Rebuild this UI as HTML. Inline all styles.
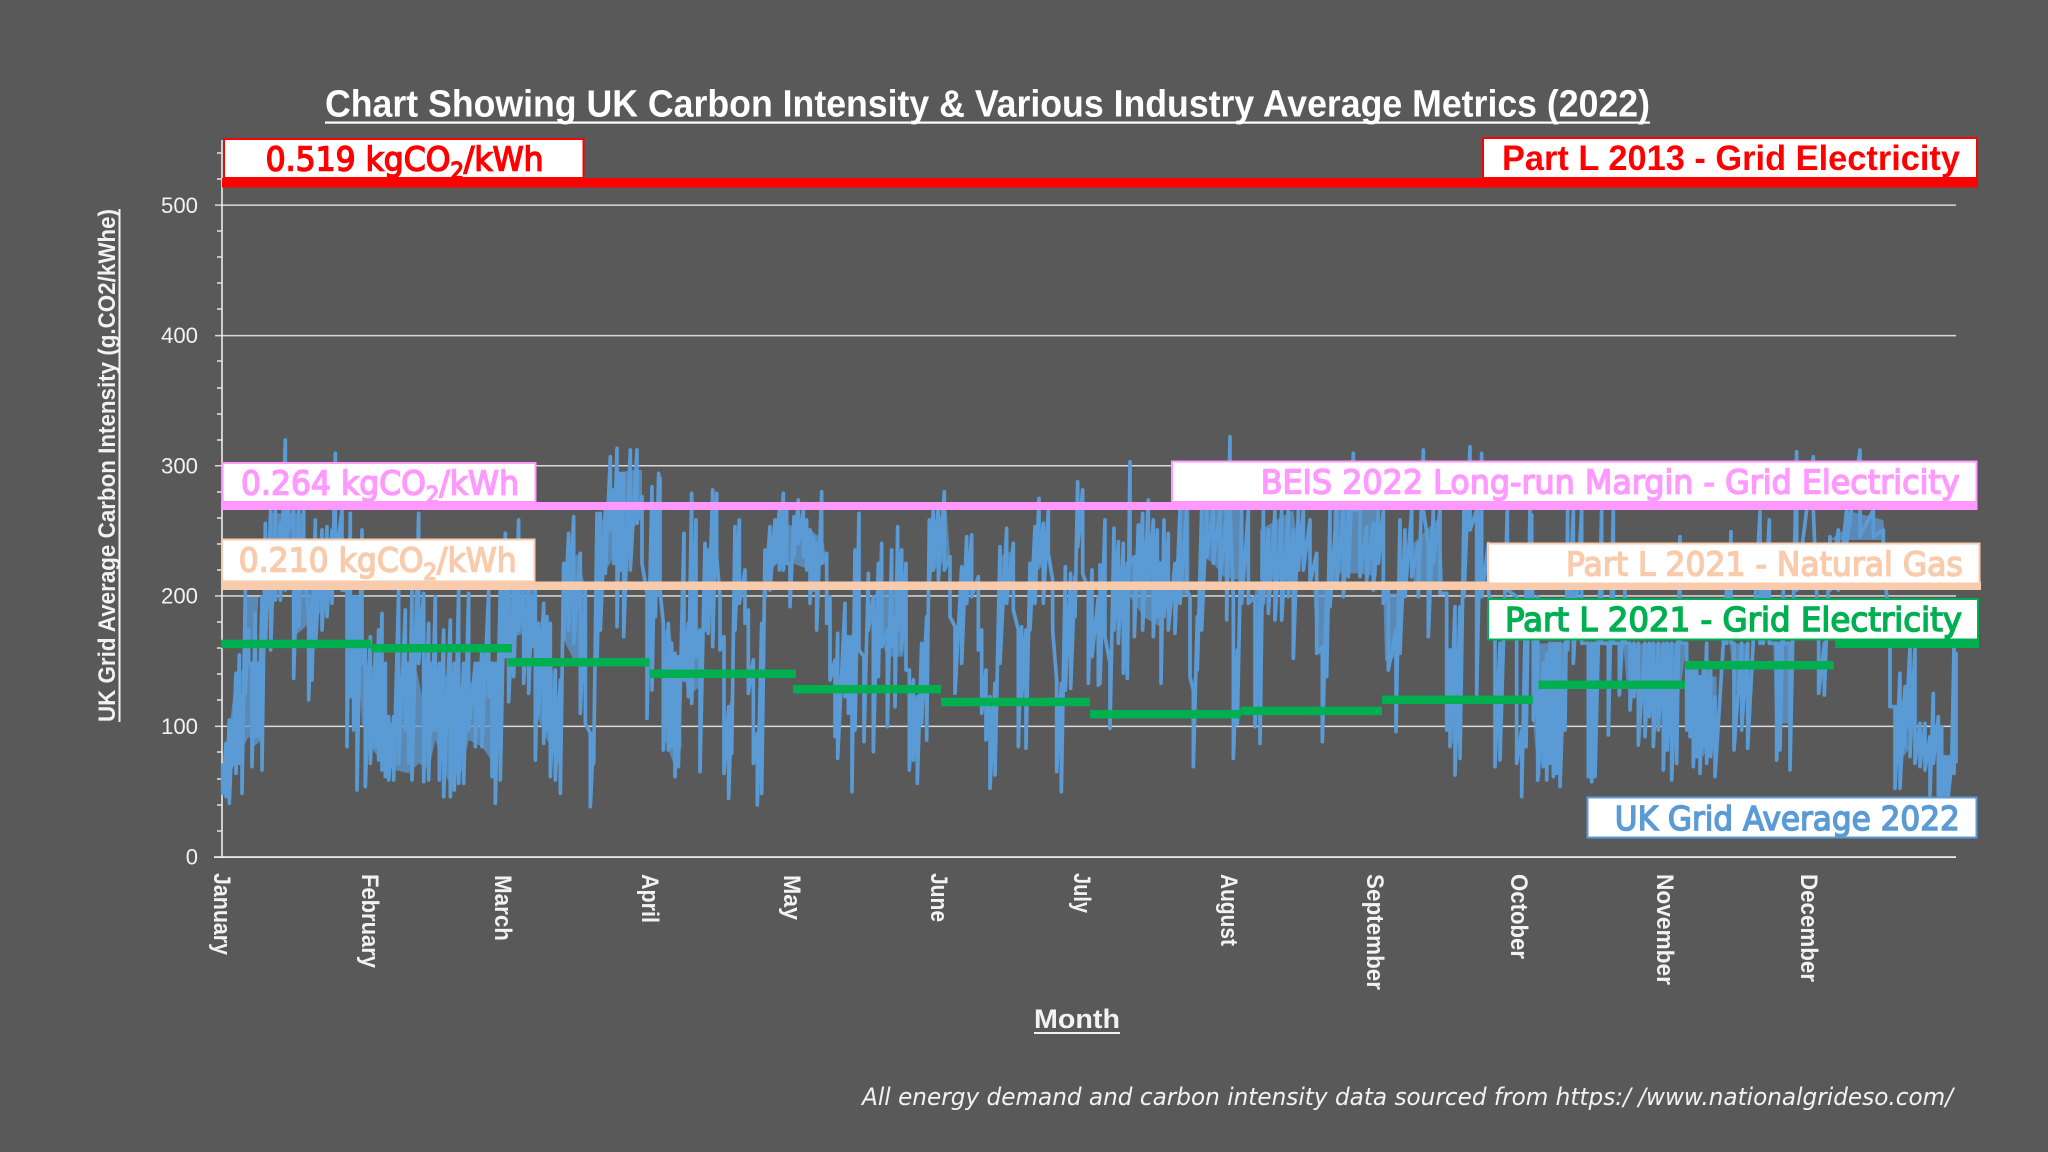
<!DOCTYPE html>
<html lang="en"><head><meta charset="utf-8"><title>UK Carbon Intensity 2022</title>
<style>
html,body{margin:0;padding:0;background:#595959;width:2048px;height:1152px;overflow:hidden}
svg{display:block}
text{font-family:"Liberation Sans",sans-serif}
.lab{font-family:"DejaVu Sans",sans-serif;font-size:33px;stroke-width:1.5px}
.yn{font-size:22px;fill:#f2f2f2;text-anchor:end}
.mo{font-size:24px;font-weight:700;fill:#f2f2f2}
</style></head><body>
<svg width="2048" height="1152" viewBox="0 0 2048 1152" xmlns="http://www.w3.org/2000/svg">
<rect width="2048" height="1152" fill="#595959"/>
<!-- title -->
<text x="325" y="116.5" font-size="38" font-weight="700" fill="#fff" textLength="1325" lengthAdjust="spacingAndGlyphs">Chart Showing UK Carbon Intensity &amp; Various Industry Average Metrics (2022)</text>
<rect x="325" y="121.5" width="1325" height="2.2" fill="#fff"/>
<!-- gridlines -->
<g fill="#d9d9d9">
<rect x="215" y="204.4" width="1741" height="1.5"/>
<rect x="215" y="334.9" width="1741" height="1.5"/>
<rect x="215" y="465" width="1741" height="1.5"/>
<rect x="215" y="595.2" width="1741" height="1.5"/>
<rect x="215" y="725.6" width="1741" height="1.5"/>
<rect x="214" y="856.2" width="1742" height="1.8" fill="#ececec"/>
</g>
<!-- minor ticks -->
<path d="M217 153h5M217 179h5M217 231h5M217 257h5M217 283h5M217 309h5M217 361h5M217 388h5M217 414h5M217 440h5M217 492h5M217 518h5M217 544h5M217 570h5M217 622h5M217 648h5M217 674h5M217 700h5M217 752h5M217 779h5M217 805h5M217 831h5" stroke="#e6e6e6" stroke-width="1.5" fill="none"/>
<rect x="221.2" y="140" width="1.6" height="717" fill="#ececec"/>
<!-- blue core masses -->
<g fill="#5b9bd5" fill-opacity=".72">
<g transform="translate(222 430) scale(.33333)">
<polygon points="22,900 40,740 60,720 80,700 110,720 125,760 120,930 95,950 80,920 60,960 30,1020 10,1040"/>
<polygon points="145,250 250,250 250,330 145,330"/>
<polygon points="70,500 110,500 100,640 70,640"/>
<polygon points="215,480 330,480 310,540 280,560 240,600 215,620"/>
<polygon points="410,680 470,720 490,860 510,880 540,720 580,700 600,800 660,760 680,720 720,770 780,740 810,790 815,1000 780,950 740,930 720,1020 680,1060 640,930 620,1020 590,1000 560,1030 520,1020 480,1000 440,940 420,880"/>
<polygon points="840,480 940,480 930,600 880,620 840,620"/>
<polygon points="945,600 985,590 995,760 1010,800 1010,1000 970,920 945,860"/>
<polygon points="1030,400 1070,370 1090,480 1095,640 1060,700 1030,640"/>
<polygon points="1130,300 1165,210 1190,130 1225,120 1260,120 1260,260 1230,300 1190,340 1165,400 1130,450"/>
</g>
<g transform="translate(660 430) scale(.33333)">
<polygon points="5,610 30,590 40,680 60,760 65,950 40,1000 15,930"/>
<polygon points="70,600 120,600 130,760 85,800 70,730"/>
<polygon points="320,360 360,270 400,290 440,290 490,330 500,400 450,420 400,400 350,400 320,440"/>
<polygon points="810,290 860,240 870,380 810,430"/>
<polygon points="655,480 730,480 730,680 680,680 655,600"/>
<polygon points="1120,310 1170,300 1170,380 1120,440"/>
<polygon points="1020,380 1060,360 1060,480 1020,480"/>
</g>
<g transform="translate(1100 430) scale(.33333)">
<polygon points="90,400 150,350 185,400 210,440 210,500 180,590 130,560 90,500"/>
<polygon points="240,240 268,240 268,500 240,500"/>
<polygon points="310,240 420,240 420,450 370,440 340,400 310,380"/>
<polygon points="480,300 580,240 600,400 580,450 480,450"/>
<polygon points="700,240 840,240 830,440 780,430 720,430 700,460"/>
<polygon points="940,340 1020,260 1030,470 940,470"/>
<polygon points="850,490 900,490 895,660 870,700 855,690"/>
<polygon points="465,480 488,480 488,830 465,830"/>
<polygon points="1040,670 1080,670 1080,940 1050,940"/>
<polygon points="640,480 690,480 675,680 650,670"/>
</g>
<g transform="translate(1530 430) scale(.33333)">
<polygon points="10,640 108,640 108,900 80,920 60,1000 20,1000 10,880"/>
<polygon points="170,640 197,640 197,1040 170,1040"/>
<polygon points="280,640 470,640 455,750 400,800 340,790 290,770"/>
<polygon points="480,740 560,740 560,900 520,980 490,940"/>
<polygon points="600,640 660,640 650,780 610,780"/>
<polygon points="730,640 790,640 785,880 735,880"/>
<polygon points="1095,850 1125,790 1135,960 1100,1010"/>
<polygon points="945,240 1060,270 1065,330 900,330 940,300"/>
</g>
</g>
<!-- blue series -->
<g fill="none" stroke="#5b9bd5" stroke-width="11" stroke-linejoin="round">
<polyline transform="translate(222 430) scale(.33333)" points="2,1000 2,1090 12,940 12,1100 22,870 22,1120 32,870 32,1000 42,730 42,1030 52,675 52,1000 60,800 60,1090 70,480 70,790 80,600 80,700 90,700 90,1010 100,550 100,920 110,700 110,920 120,500 120,1020 130,280 130,650 146,240 146,660 160,240 160,510 175,280 175,510 190,30 190,480 200,240 200,300 215,240 215,745 230,240 230,590 245,240 245,400 260,560 260,810 270,500 270,750 280,270 280,650 300,300 300,600 315,290 315,560 330,300 330,520 340,70 340,400 360,240 360,480 375,480 375,950 385,250 385,800 395,500 395,900 405,500 405,1080 420,300 420,700 430,650 430,1070 445,620 445,1000 460,670 460,950 470,600 470,990 480,550 480,1020 490,700 490,1040 500,860 500,1050 515,860 515,1050 530,480 530,1000 550,540 550,900 560,700 560,1000 570,480 570,1050 590,250 590,700 605,490 605,1055 620,580 620,1050 630,700 630,900 640,500 640,900 652,700 652,1050 665,600 665,1100 685,570 685,1100 697,700 697,1080 710,480 710,1060 725,700 725,1060 740,490 740,900 760,700 760,950 770,700 770,880 780,650 780,950 800,480 800,800 810,700 810,1040 820,700 820,1120 835,480 835,1050 850,310 850,680 860,480 860,815 875,480 875,740 890,270 890,600 905,480 905,760 920,480 920,790 930,500 930,650 940,480 940,990 950,580 950,850 965,520 965,940 975,560 975,900 985,580 985,1040 1000,720 1000,1050 1015,750 1015,1090 1025,400 1025,630 1040,310 1040,600 1055,260 1055,640 1075,370 1075,850 1090,480 1090,880 1105,910 1105,1130 1115,910 1115,1000 1125,250 1125,700 1135,250 1135,600 1150,240 1150,430 1165,80 1165,300 1175,180 1175,400 1185,55 1185,590 1195,130 1195,420 1205,130 1205,620 1225,60 1225,420 1245,60 1245,280 1260,200 1260,400 1275,490 1275,865 1290,170 1290,780 1300,240 1300,560 1310,130 1310,500"/>
<polyline transform="translate(660 430) scale(.33333)" points="0,140 0,480 10,580 10,960 25,580 25,960 35,640 35,950 45,670 45,1040 55,680 55,1010 72,310 72,750 85,580 85,800 95,190 95,820 108,270 108,680 120,600 120,1025 135,340 135,600 145,360 145,610 158,180 158,650 170,190 170,380 180,500 180,660 192,620 192,1030 206,830 206,1105 215,820 215,970 225,290 225,600 238,270 238,520 255,420 255,580 265,540 265,790 280,690 280,1000 292,910 292,1125 305,580 305,1090 315,360 315,500 330,290 330,480 345,270 345,400 358,240 358,420 370,190 370,420 380,240 380,400 390,400 390,530 402,260 402,380 415,210 415,340 430,240 430,380 440,270 440,420 450,300 450,520 460,320 460,480 470,340 470,600 485,185 485,400 500,370 500,580 510,500 510,750 525,690 525,920 533,610 533,985 555,520 555,800 565,620 565,850 576,620 576,1085 585,360 585,900 597,250 597,660 612,680 612,935 625,430 625,600 640,500 640,965 655,400 655,740 665,340 665,650 682,600 682,890 695,360 695,650 705,560 705,830 713,290 713,600 725,360 725,660 738,400 738,720 748,720 748,1020 760,750 760,990 772,800 772,1060 785,640 785,880 800,560 800,930 808,270 808,470 820,230 820,420 835,230 835,450 853,185 853,420 870,380 870,560 885,590 885,790 905,410 905,700 920,320 920,520 935,315 935,500 955,440 955,660 965,600 965,850 978,720 978,930 990,800 990,1075 1005,760 1005,1035 1020,350 1020,700 1040,295 1040,520 1060,340 1060,540 1075,600 1075,950 1085,590 1085,800 1098,600 1098,955 1110,400 1110,600 1125,290 1125,520 1137,205 1137,400 1150,280 1150,520 1165,240 1165,370 1178,450 1178,600 1190,750 1190,1025 1204,760 1204,1085 1216,410 1216,780 1232,430 1232,775 1245,440 1245,560 1253,155 1253,350 1268,180 1268,430 1285,480 1285,760 1296,420 1296,680 1315,500 1315,770"/>
<polyline transform="translate(1100 430) scale(.33333)" points="0,400 0,760 15,270 15,620 30,700 30,895 42,295 42,600 55,335 55,640 70,340 70,730 82,400 82,745 90,95 90,400 103,380 103,620 115,285 115,480 128,250 128,600 145,210 145,470 160,270 160,620 172,300 172,560 183,400 183,760 192,270 192,560 205,310 205,600 225,400 225,610 240,240 240,520 260,240 260,480 270,500 270,740 280,780 280,1010 292,560 292,720 305,240 305,600 320,240 320,380 340,240 340,400 360,240 360,450 380,240 380,570 390,20 390,240 400,500 400,985 412,660 412,880 425,240 425,520 445,240 445,520 465,500 465,890 480,480 480,940 490,240 490,520 505,300 505,550 525,240 525,570 545,240 545,570 565,240 565,500 580,300 580,685 595,240 595,420 610,240 610,420 630,270 630,460 650,370 650,670 667,650 667,935 680,470 680,740 690,240 690,530 710,240 710,470 730,240 730,500 745,240 745,440 760,70 760,240 780,240 780,440 800,290 800,450 820,280 820,480 835,240 835,400 850,240 850,520 865,470 865,720 888,600 888,905 900,270 900,670 915,300 915,500 935,240 935,440 955,340 955,500 970,60 970,240 985,340 985,620 1000,240 1000,400 1020,240 1020,490 1040,490 1040,900 1050,660 1050,950 1065,530 1065,1035 1080,530 1080,985 1092,240 1092,500 1110,50 1110,300 1130,240 1130,800 1145,70 1145,500 1165,340 1165,480 1185,600 1185,1010 1200,640 1200,990 1222,240 1222,480 1250,500 1250,1000 1265,900 1265,1100 1278,480 1278,950 1290,240 1290,480 1300,500 1300,800 1313,500 1313,1055"/>
<polyline transform="translate(1530 430) scale(.33333)" points="5,250 5,330 10,640 10,870 25,770 25,1040 40,700 40,1010 50,670 50,1050 60,640 60,1000 70,640 70,1040 80,640 80,1030 90,640 90,1070 105,640 105,900 113,240 113,660 130,240 130,700 155,240 155,640 175,640 175,1040 185,640 185,1055 195,640 195,1040 215,240 215,640 235,640 235,915 250,240 250,640 268,640 268,795 285,480 285,640 300,640 300,840 312,640 312,800 325,640 325,945 345,640 345,920 358,640 358,860 370,640 370,950 385,640 385,900 400,640 400,1020 412,640 412,960 425,640 425,1050 440,640 440,1000 450,320 450,640 470,640 470,900 480,700 480,920 490,700 490,1010 500,720 500,980 510,740 510,1030 520,720 520,950 530,640 530,1000 542,720 542,980 555,800 555,1040 590,480 590,640 603,305 603,640 612,640 612,960 635,640 635,900 653,640 653,955 690,245 690,640 700,480 700,640 718,270 718,640 740,640 740,990 750,640 750,960 760,480 760,640 780,640 780,1020 800,65 800,480 850,80 850,240 866,640 866,790 883,640 883,795 900,320 900,480 925,300 925,480 950,240 950,340 990,60 990,320 1030,240 1030,320 1060,300 1060,340 1080,655 1080,830 1095,830 1095,1075 1110,730 1110,1075 1125,770 1125,950 1140,650 1140,980 1155,650 1155,1000 1170,880 1170,1010 1185,880 1185,1020 1200,920 1200,1095 1210,790 1210,1000 1225,860 1225,1095 1235,890 1235,1095 1245,980 1245,1095 1255,980 1255,1095 1265,1000 1265,1010 1272,650 1272,1030 1278,670 1278,1000"/>
</g>
<!-- coloured lines -->
<rect x="222" y="178" width="1756" height="9.5" fill="#ff0000"/>
<rect x="221" y="502" width="1756.5" height="8" fill="#ff99ff"/>
<rect x="221" y="581.5" width="1760" height="8.5" fill="#f8cbad"/>
<!-- green segments -->
<g fill="#00b050">
<rect x="221" y="639.7" width="150" height="8.5"/>
<rect x="371" y="644" width="141" height="8.5"/>
<rect x="507.6" y="658" width="142" height="8.5"/>
<rect x="649.5" y="669.5" width="146.5" height="8.5"/>
<rect x="793" y="685" width="148" height="8.5"/>
<rect x="941" y="697.7" width="149" height="8.5"/>
<rect x="1090" y="710" width="150.6" height="8.5"/>
<rect x="1240.6" y="706.7" width="141.4" height="8.5"/>
<rect x="1382" y="695.5" width="150.8" height="8.5"/>
<rect x="1538.5" y="680.5" width="146.5" height="8.5"/>
<rect x="1685" y="661" width="149" height="8.5"/>
<rect x="1835" y="639.5" width="144" height="8.5"/>
</g>
<!-- label boxes -->
<g fill="#fff" stroke-width="2">
<rect x="224" y="139" width="359.5" height="39" stroke="#ff0000"/>
<rect x="1483" y="138" width="494" height="40" stroke="#ff0000"/>
<rect x="222.5" y="463" width="313" height="39" stroke="#ff99ff"/>
<rect x="1172" y="461.5" width="804.5" height="40.5" stroke="#ff99ff"/>
<rect x="222" y="539.5" width="312.5" height="42" stroke="#f8cbad"/>
<rect x="1488" y="543.5" width="491.5" height="40" stroke="#f8cbad"/>
<rect x="1488" y="599" width="490" height="40.5" stroke="#00b050"/>
<rect x="1587.5" y="797.5" width="389" height="40" stroke="#5b9bd5"/>
</g>
<!-- label text -->
<text class="lab" x="265.6" y="170.7" fill="#ff0000" stroke="#ff0000" textLength="278" lengthAdjust="spacingAndGlyphs">0.519 kgCO<tspan font-size="22" dy="8">2</tspan><tspan dy="-8">/kWh</tspan></text>
<text class="lab" x="241" y="494.3" fill="#ff99ff" stroke="#ff99ff" textLength="278" lengthAdjust="spacingAndGlyphs">0.264 kgCO<tspan font-size="22" dy="8">2</tspan><tspan dy="-8">/kWh</tspan></text>
<text class="lab" x="238.7" y="571.7" fill="#f8cbad" stroke="#f8cbad" textLength="278" lengthAdjust="spacingAndGlyphs">0.210 kgCO<tspan font-size="22" dy="8">2</tspan><tspan dy="-8">/kWh</tspan></text>
<text x="1502" y="170" font-size="35" font-weight="700" fill="#ff0000" textLength="458" lengthAdjust="spacingAndGlyphs">Part L 2013 - Grid Electricity</text>
<text class="lab" x="1260.7" y="493.3" fill="#ff99ff" stroke="#ff99ff" textLength="699" lengthAdjust="spacingAndGlyphs">BEIS 2022 Long-run Margin - Grid Electricity</text>
<text class="lab" x="1566" y="575.7" fill="#f8cbad" stroke="#f8cbad" textLength="396.7" lengthAdjust="spacingAndGlyphs">Part L 2021 - Natural Gas</text>
<text class="lab" x="1505" y="631" fill="#00b050" stroke="#00b050" textLength="457" lengthAdjust="spacingAndGlyphs">Part L 2021 - Grid Electricity</text>
<text class="lab" x="1614.8" y="830" fill="#5b9bd5" stroke="#5b9bd5" textLength="345" lengthAdjust="spacingAndGlyphs">UK Grid Average 2022</text>
<!-- y numbers -->
<text class="yn" x="198" y="213" textLength="37" lengthAdjust="spacingAndGlyphs">500</text>
<text class="yn" x="198" y="343" textLength="37" lengthAdjust="spacingAndGlyphs">400</text>
<text class="yn" x="198" y="473.5" textLength="37" lengthAdjust="spacingAndGlyphs">300</text>
<text class="yn" x="198" y="603.5" textLength="37" lengthAdjust="spacingAndGlyphs">200</text>
<text class="yn" x="198" y="734" textLength="37" lengthAdjust="spacingAndGlyphs">100</text>
<text class="yn" x="198" y="864.5">0</text>
<!-- y title -->
<text transform="translate(115 722) rotate(-90)" font-size="24" font-weight="700" fill="#f2f2f2" textLength="513" lengthAdjust="spacingAndGlyphs">UK Grid Average Carbon Intensity (g.CO2/kWhe)</text>
<rect x="118.5" y="209" width="2" height="513" fill="#f2f2f2"/>
<!-- months -->
<text class="mo" transform="translate(214 873) rotate(90)" textLength="82" lengthAdjust="spacingAndGlyphs">January</text>
<text class="mo" transform="translate(362 874) rotate(90)" textLength="94" lengthAdjust="spacingAndGlyphs">February</text>
<text class="mo" transform="translate(495 875) rotate(90)" textLength="66" lengthAdjust="spacingAndGlyphs">March</text>
<text class="mo" transform="translate(642 874) rotate(90)" textLength="49" lengthAdjust="spacingAndGlyphs">April</text>
<text class="mo" transform="translate(784 875) rotate(90)" textLength="45" lengthAdjust="spacingAndGlyphs">May</text>
<text class="mo" transform="translate(931 873) rotate(90)" textLength="49" lengthAdjust="spacingAndGlyphs">June</text>
<text class="mo" transform="translate(1074 873) rotate(90)" textLength="40" lengthAdjust="spacingAndGlyphs">July</text>
<text class="mo" transform="translate(1221 874) rotate(90)" textLength="72" lengthAdjust="spacingAndGlyphs">August</text>
<text class="mo" transform="translate(1367 874) rotate(90)" textLength="116" lengthAdjust="spacingAndGlyphs">September</text>
<text class="mo" transform="translate(1511 874) rotate(90)" textLength="85" lengthAdjust="spacingAndGlyphs">October</text>
<text class="mo" transform="translate(1657 874) rotate(90)" textLength="111" lengthAdjust="spacingAndGlyphs">November</text>
<text class="mo" transform="translate(1801 874) rotate(90)" textLength="108" lengthAdjust="spacingAndGlyphs">December</text>
<!-- x title -->
<text x="1034" y="1028" font-size="27" font-weight="700" fill="#f2f2f2" textLength="86" lengthAdjust="spacingAndGlyphs">Month</text>
<rect x="1034" y="1032" width="86" height="2" fill="#f2f2f2"/>
<!-- footnote -->
<text x="862" y="1105" font-size="24" font-style="italic" fill="#f2f2f2" style="font-family:'DejaVu Sans',sans-serif" textLength="1091" lengthAdjust="spacingAndGlyphs">All energy demand and carbon intensity data sourced from https:/ /www.nationalgrideso.com/</text>
</svg>
</body></html>
